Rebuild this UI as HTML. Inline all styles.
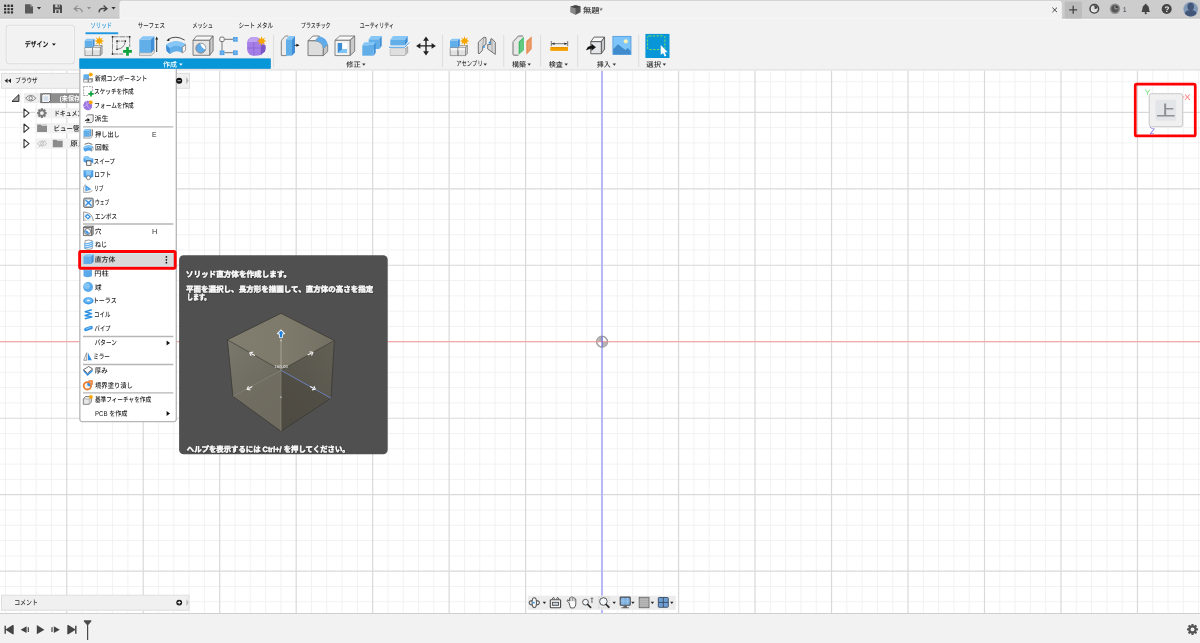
<!DOCTYPE html>
<html lang="ja"><head><meta charset="utf-8"><title>Fusion 360</title>
<style>
html,body{margin:0;padding:0;background:#f2f2f2;overflow:hidden}
svg{display:block;font-family:"Liberation Sans","Noto Sans CJK JP",sans-serif;will-change:transform;transform:translateZ(0);text-rendering:geometricPrecision}
</style></head><body>
<svg width="1200" height="643" viewBox="0 0 1200 643">
<rect x="0.00" y="70.40" width="1200.00" height="543.10" fill="#ffffff" />
<path d="M5.56 70.4V613.5M20.85 70.4V613.5M36.15 70.4V613.5M51.44 70.4V613.5M82.04 70.4V613.5M97.33 70.4V613.5M112.63 70.4V613.5M127.92 70.4V613.5M158.52 70.4V613.5M173.81 70.4V613.5M189.11 70.4V613.5M204.40 70.4V613.5M235.00 70.4V613.5M250.29 70.4V613.5M265.59 70.4V613.5M280.88 70.4V613.5M311.48 70.4V613.5M326.77 70.4V613.5M342.07 70.4V613.5M357.36 70.4V613.5M387.96 70.4V613.5M403.25 70.4V613.5M418.55 70.4V613.5M433.84 70.4V613.5M464.44 70.4V613.5M479.73 70.4V613.5M495.03 70.4V613.5M510.32 70.4V613.5M540.92 70.4V613.5M556.21 70.4V613.5M571.51 70.4V613.5M586.80 70.4V613.5M617.40 70.4V613.5M632.69 70.4V613.5M647.99 70.4V613.5M663.28 70.4V613.5M693.88 70.4V613.5M709.17 70.4V613.5M724.47 70.4V613.5M739.76 70.4V613.5M770.36 70.4V613.5M785.65 70.4V613.5M800.95 70.4V613.5M816.24 70.4V613.5M846.84 70.4V613.5M862.13 70.4V613.5M877.43 70.4V613.5M892.72 70.4V613.5M923.32 70.4V613.5M938.61 70.4V613.5M953.91 70.4V613.5M969.20 70.4V613.5M999.80 70.4V613.5M1015.09 70.4V613.5M1030.39 70.4V613.5M1045.68 70.4V613.5M1076.28 70.4V613.5M1091.57 70.4V613.5M1106.87 70.4V613.5M1122.16 70.4V613.5M1152.76 70.4V613.5M1168.05 70.4V613.5M1183.35 70.4V613.5M1198.64 70.4V613.5M0 81.72H1200M0 97.01H1200M0 127.61H1200M0 142.90H1200M0 158.20H1200M0 173.49H1200M0 204.09H1200M0 219.38H1200M0 234.68H1200M0 249.97H1200M0 280.57H1200M0 295.86H1200M0 311.16H1200M0 326.45H1200M0 357.05H1200M0 372.34H1200M0 387.64H1200M0 402.93H1200M0 433.53H1200M0 448.82H1200M0 464.12H1200M0 479.41H1200M0 510.01H1200M0 525.30H1200M0 540.60H1200M0 555.89H1200M0 586.49H1200M0 601.78H1200" stroke="#f2f2f2" stroke-width="1" fill="none"/>
<path d="M66.74 70.4V613.5M143.22 70.4V613.5M219.70 70.4V613.5M296.18 70.4V613.5M372.66 70.4V613.5M449.14 70.4V613.5M525.62 70.4V613.5M602.10 70.4V613.5M678.58 70.4V613.5M755.06 70.4V613.5M831.54 70.4V613.5M908.02 70.4V613.5M984.50 70.4V613.5M1060.98 70.4V613.5M1137.46 70.4V613.5M0 112.31H1200M0 188.79H1200M0 265.27H1200M0 341.75H1200M0 418.23H1200M0 494.71H1200M0 571.19H1200" stroke="#d9d9d9" stroke-width="1.2" fill="none"/>
<line x1="0.00" y1="341.65" x2="1200.00" y2="341.65" stroke="#f7a8a8" stroke-width="1.1" />
<line x1="601.95" y1="70.40" x2="601.95" y2="613.50" stroke="#adadf8" stroke-width="1.6" />
<g transform="translate(602.1,341.75)"><circle r="5.4" fill="#ffffff" stroke="#9c9c9c" stroke-width="1.5"/><path d="M0 0V-5.6A5.6 5.6 0 0 0 -5.6 0Z" fill="#b5b5b5"/><path d="M0 0V5.6A5.6 5.6 0 0 0 5.6 0Z" fill="#b5b5b5"/><line x1="-5.6" x2="5.6" stroke="#f08c8c" stroke-width="1"/><line y1="-5.6" y2="5.6" stroke="#6a6ad8" stroke-width="1.3"/></g>
<rect x="1.50" y="73.40" width="188.00" height="14.90" fill="#f0f0f0" stroke="#dedede" stroke-width="1" />
<path d="M7.6 78.6v4.4l-3-2.2zM11 78.6v4.4l-3-2.2z" fill="#222"/>
<text x="15.33" y="83.00" font-size="7.0" fill="#333" font-weight="500" textLength="22.20" lengthAdjust="spacingAndGlyphs" >ブラウザ</text>
<path d="M186.2 76.9v7.4l2.5-3.7z" fill="#b4b4b4"/>
<rect x="24.00" y="93.20" width="60.00" height="9.90" fill="#ececec" />
<rect x="40.00" y="93.20" width="45.00" height="9.90" fill="#8e8e8e" />
<path d="M12 101.4h6.9v-6.8z" fill="#a8a8a8" stroke="#2a2a2a" stroke-width="1" stroke-linejoin="round"/>
<text x="59.84" y="101.00" font-size="7.0" fill="#fff" font-weight="bold" textLength="22.26" lengthAdjust="spacingAndGlyphs" >(未保存)</text>
<rect x="35.00" y="107.90" width="50.00" height="10.40" fill="#f2f2f2" />
<path d="M24 108.90v8.4l5-4.2z" fill="#fff" stroke="#333" stroke-width="1.1" stroke-linejoin="round"/>
<rect x="35.00" y="123.00" width="50.00" height="10.40" fill="#f2f2f2" />
<path d="M24 124.00v8.4l5-4.2z" fill="#fff" stroke="#333" stroke-width="1.1" stroke-linejoin="round"/>
<rect x="35.00" y="138.40" width="50.00" height="10.40" fill="#f2f2f2" />
<path d="M24 139.40v8.4l5-4.2z" fill="#fff" stroke="#333" stroke-width="1.1" stroke-linejoin="round"/>
<text x="53.99" y="116.00" font-size="7.0" fill="#222" font-weight="500" textLength="52.57" lengthAdjust="spacingAndGlyphs" >ドキュメントの設定</text>
<text x="53.61" y="131.00" font-size="7.0" fill="#222" font-weight="500" textLength="32.18" lengthAdjust="spacingAndGlyphs" >ビュー管理</text>
<text x="70.39" y="146.00" font-size="7.0" fill="#222" font-weight="500" textLength="15.06" lengthAdjust="spacingAndGlyphs" >原点</text>
<rect x="1.50" y="595.20" width="187.50" height="15.00" fill="#f0f0f0" stroke="#dedede" stroke-width="1" />
<text x="14.24" y="605.00" font-size="7.0" fill="#333" font-weight="500" textLength="23.53" lengthAdjust="spacingAndGlyphs" >コメント</text>
<circle cx="179.2" cy="602.6" r="2.9" fill="#111"/><path d="M177.4 602.6h3.6M179.2 600.8v3.6" stroke="#fff" stroke-width="0.9"/>
<path d="M186.4 599v7.2l2.2-3.6z" fill="#b8b8b8"/>
<rect x="527.80" y="595.70" width="148.00" height="14.10" fill="#ececec" />
<rect x="1149.20" y="93.70" width="33.50" height="33.00" fill="#f0f0f0" rx="2" stroke="#c9c9c9" stroke-width="1" />
<rect x="1155.30" y="99.80" width="20.90" height="20.90" fill="#e3e5e8" />
<text x="1155.96" y="116.00" font-size="15" fill="#8c9097" font-weight="500" textLength="19.61" lengthAdjust="spacingAndGlyphs" >上</text>
<path d="M1182.9 97h1.4" stroke="#ff6a6a" stroke-width="0.8"/><path d="M1150.6 127v1" stroke="#7a66f0" stroke-width="0.8"/>
<text x="1144.44" y="95.00" font-size="8" fill="#80e080" font-weight="500" textLength="6.17" lengthAdjust="spacingAndGlyphs" >Y</text>
<text x="1184.37" y="100.00" font-size="8" fill="#ff6a6a" font-weight="500" textLength="6.29" lengthAdjust="spacingAndGlyphs" >X</text>
<text x="1150.00" y="134.00" font-size="8" fill="#7a66f0" font-weight="500" textLength="4.52" lengthAdjust="spacingAndGlyphs" font-style="italic">Z</text>
<path d="M25.6 98.2Q30.7 92.6 35.8 98.2Q30.7 103.8 25.6 98.2Z" fill="#f6f6f6" stroke="#777" stroke-width="0.9"/><circle cx="30.7" cy="98.2" r="1.7" fill="none" stroke="#777" stroke-width="0.9"/>
<path d="M43 93.9H50.4V100.6L48.6 102.5H41.7V95.4Z" fill="#f1f3f6" stroke="#555" stroke-width="0.8" stroke-linejoin="round"/><rect x="43.6" y="96.2" width="4.6" height="4.6" fill="#d5deeb"/>
<path d="M46.70 112.13L46.70 114.07L45.14 114.43L45.13 114.45L45.98 115.81L44.61 117.18L43.25 116.33L43.23 116.34L42.87 117.90L40.93 117.90L40.57 116.34L40.55 116.33L39.19 117.18L37.82 115.81L38.67 114.45L38.66 114.43L37.10 114.07L37.10 112.13L38.66 111.77L38.67 111.75L37.82 110.39L39.19 109.02L40.55 109.87L40.57 109.86L40.93 108.30L42.87 108.30L43.23 109.86L43.25 109.87L44.61 109.02L45.98 110.39L45.13 111.75L45.14 111.77Z" fill="#7a7a7a"/><circle cx="41.9" cy="113.1" r="1.9" fill="#f2f2f2"/>
<path d="M37.1 124.50H40.9L41.9 125.70H47.0V131.90H37.1Z" fill="#8c8c8c"/><path d="M41.5 124.50H47.0V125.30H42.300000000000004Z" fill="#b5b5b5"/>
<path d="M52.8 139.80H56.599999999999994L57.599999999999994 141.00H62.699999999999996V147.20H52.8Z" fill="#8c8c8c"/><path d="M57.199999999999996 139.80H62.699999999999996V140.60H58.0Z" fill="#b5b5b5"/>
<path d="M37.4 143.5Q42.2 138.4 47 143.5Q42.2 148.6 37.4 143.5Z" fill="none" stroke="#bdbdbd" stroke-width="0.8"/><circle cx="42.2" cy="143.5" r="1.6" fill="none" stroke="#bdbdbd" stroke-width="0.8"/><path d="M39 147L45.4 140" stroke="#bdbdbd" stroke-width="0.8"/>
<ellipse cx="534.3" cy="602.7" rx="5.1" ry="2.3" fill="#f8f8f8" stroke="#5a5a5a" stroke-width="1.1"/><ellipse cx="534.3" cy="602.7" rx="2.2" ry="4.9" fill="#f8f8f8" stroke="#5a5a5a" stroke-width="1.1"/><rect x="532.4" y="601.9000000000001" width="2.4" height="1.5" fill="#3f9ae8"/>
<rect x="550.3" y="599.8000000000001" width="10.3" height="8" rx="0.8" fill="#f4f4f4" stroke="#4a4a4a" stroke-width="1.1"/><rect x="552.4" y="602.3000000000001" width="6.1" height="3" fill="#c9d3e0" stroke="#4a4a4a" stroke-width="0.9"/><path d="M552 599.1L553.6 597.3000000000001L554.4 598.9000000000001M556.6 598.9000000000001L557.6 597.3000000000001L559 599.1" fill="none" stroke="#4a4a4a" stroke-width="0.9"/>
<path d="M569.2 602.9000000000001L567.3 601.3000000000001Q566.5 600.1 567.8 599.9000000000001L569.4 601.1V598.9000000000001Q569.4 597.7 570.4 597.9000000000001Q570.6 596.9000000000001 571.7 597.1Q572.6 596.7 573.2 597.7Q574.4 597.3000000000001 574.8 598.5Q576 598.7 575.8 600.1V604.1Q575.6 606.3000000000001 574.2 607.9000000000001H570.6Q569.4 605.3000000000001 569.2 602.9000000000001Z" fill="#fbfbfb" stroke="#444" stroke-width="0.85" stroke-linejoin="round"/>
<path d="M570.9 598.3000000000001V601.3000000000001M572.5 597.7V601.1M574.1 598.1V601.3000000000001" stroke="#555" stroke-width="0.6" fill="none"/>
<circle cx="585.5" cy="602.2" r="2.9" fill="#f4f7fa" stroke="#555" stroke-width="1"/><path d="M587.7 604.5L590.6 607.4000000000001" stroke="#2c2c2c" stroke-width="1.7" stroke-linecap="round"/><path d="M591.9 597.9000000000001V601.7M590.7 599.1L591.9 597.7L593.1 599.1M590.9 602.1h2" stroke="#444" stroke-width="0.7" fill="none"/>
<rect x="598.8" y="596.9000000000001" width="10.4" height="11" fill="none" stroke="#a8a8a8" stroke-width="0.5" stroke-dasharray="1.1 1.1"/><circle cx="603.4" cy="601.5" r="3.8" fill="#f3f8fb" stroke="#555" stroke-width="1"/><path d="M606.2 604.5L608.8 607.2" stroke="#2c2c2c" stroke-width="1.8" stroke-linecap="round"/>
<rect x="620.2" y="597.1" width="10" height="8.2" rx="0.6" fill="#7fb2e2" stroke="#4a4a4a" stroke-width="1.1"/><path d="M623 597.7V604.7M627.4 597.7V604.7M620.6 601.1H630" stroke="#a9cff0" stroke-width="0.5"/><path d="M623.4 605.7H627V607.3000000000001H629V608.3000000000001H621.4V607.3000000000001H623.4Z" fill="#666"/>
<rect x="639.2" y="597.3000000000001" width="9.8" height="10.4" fill="#a9a9a9" stroke="#6a6a6a" stroke-width="0.9"/><path d="M641.2 597.7V607.3000000000001M643.1 597.7V607.3000000000001M645 597.7V607.3000000000001M647 597.7V607.3000000000001M639.6 599.5H648.6M639.6 601.5H648.6M639.6 603.5H648.6M639.6 605.5H648.6" stroke="#c4c4c4" stroke-width="0.4"/>
<rect x="658.3" y="597.5" width="10" height="9.8" rx="0.8" fill="#6c9fd3" stroke="#48576b" stroke-width="1"/><path d="M663.3 597.7V607.1M658.6 602.4000000000001H668" stroke="#3d4f68" stroke-width="1"/>
<path d="M542.6999999999999 601.8000000000001h3.4l-1.7 2.2z" fill="#222"/>
<path d="M612.5 601.8000000000001h3.4l-1.7 2.2z" fill="#222"/>
<path d="M631.1999999999999 601.8000000000001h3.4l-1.7 2.2z" fill="#222"/>
<path d="M650.6999999999999 601.8000000000001h3.4l-1.7 2.2z" fill="#222"/>
<path d="M670.0999999999999 601.8000000000001h3.4l-1.7 2.2z" fill="#222"/>
<rect x="0.00" y="0.00" width="1200.00" height="18.80" fill="#cdcdcd" />
<rect x="0.00" y="17.20" width="1200.00" height="1.60" fill="#c5c5c5" />
<path d="M120 19V3.3a2 2 0 0 1 2-2H1059.3a2 2 0 0 1 2 2V19z" fill="#f2f2f2" stroke="#f9f9f9" stroke-width="0.8"/>
<rect x="0.00" y="18.80" width="1200.00" height="51.60" fill="#f2f2f2" />
<rect x="0.00" y="18.90" width="120.00" height="1.00" fill="#f9f9f9" />
<rect x="1061.50" y="18.90" width="140.00" height="1.00" fill="#f9f9f9" />
<line x1="0.00" y1="69.80" x2="1200.00" y2="69.80" stroke="#e6e6e6" stroke-width="1.4" />
<text x="582.90" y="13.00" font-size="7.6" fill="#333" font-weight="500" textLength="19.90" lengthAdjust="spacingAndGlyphs" >無題*</text>
<rect x="1064.70" y="1.60" width="17.30" height="17.00" fill="#bcbcbc" rx="1.5" />
<rect x="6.30" y="25.30" width="68.00" height="38.30" fill="#f2f2f2" rx="3" stroke="#dedede" stroke-width="1.2" />
<rect x="7.20" y="26.20" width="66.20" height="36.50" fill="none" rx="2.4" stroke="#f8f8f8" stroke-width="0.8" />
<text x="24.70" y="47.00" font-size="7.6" fill="#111" font-weight="bold" textLength="23.60" lengthAdjust="spacingAndGlyphs" >デザイン</text>
<path d="M52.00 43.45h3.8l-1.90 2.3z" fill="#111"/>
<text x="90.48" y="28.00" font-size="7.0" fill="#2f9be3" font-weight="500" textLength="21.45" lengthAdjust="spacingAndGlyphs" >ソリッド</text>
<text x="137.68" y="28.00" font-size="7.0" fill="#333" font-weight="500" textLength="27.27" lengthAdjust="spacingAndGlyphs" >サーフェス</text>
<text x="192.18" y="28.00" font-size="7.0" fill="#333" font-weight="500" textLength="20.85" lengthAdjust="spacingAndGlyphs" >メッシュ</text>
<text x="238.41" y="28.00" font-size="7.0" fill="#333" font-weight="500" textLength="34.70" lengthAdjust="spacingAndGlyphs" >シート メタル</text>
<text x="300.97" y="28.00" font-size="7.0" fill="#333" font-weight="500" textLength="29.61" lengthAdjust="spacingAndGlyphs" >プラスチック</text>
<text x="359.80" y="28.00" font-size="7.0" fill="#333" font-weight="500" textLength="34.12" lengthAdjust="spacingAndGlyphs" >ユーティリティ</text>
<rect x="85.50" y="32.30" width="32.70" height="1.90" fill="#1e96e0" />
<rect x="79.70" y="58.80" width="190.80" height="9.70" fill="#0796d8" stroke="#0585cb" stroke-width="0.6" />
<text x="163.10" y="67.00" font-size="7.0" fill="#fff" font-weight="500" textLength="13.88" lengthAdjust="spacingAndGlyphs" >作成</text>
<path d="M179.20 63.55h3.4l-1.70 2.1z" fill="#fff"/>
<text x="346.19" y="67.00" font-size="7.0" fill="#333" font-weight="500" textLength="14.56" lengthAdjust="spacingAndGlyphs" >修正</text>
<path d="M362.10 63.55h3.4l-1.70 2.1z" fill="#333"/>
<text x="456.17" y="66.00" font-size="7.0" fill="#333" font-weight="500" textLength="26.64" lengthAdjust="spacingAndGlyphs" >アセンブリ</text>
<path d="M483.50 63.55h3.4l-1.70 2.1z" fill="#333"/>
<text x="511.94" y="67.00" font-size="7.0" fill="#333" font-weight="500" textLength="14.00" lengthAdjust="spacingAndGlyphs" >構築</text>
<path d="M527.50 63.55h3.4l-1.70 2.1z" fill="#333"/>
<text x="548.71" y="67.00" font-size="7.0" fill="#333" font-weight="500" textLength="14.05" lengthAdjust="spacingAndGlyphs" >検査</text>
<path d="M564.50 63.55h3.4l-1.70 2.1z" fill="#333"/>
<text x="596.75" y="67.00" font-size="7.0" fill="#333" font-weight="500" textLength="13.83" lengthAdjust="spacingAndGlyphs" >挿入</text>
<path d="M612.60 63.55h3.4l-1.70 2.1z" fill="#333"/>
<text x="646.36" y="67.00" font-size="7.0" fill="#333" font-weight="500" textLength="14.57" lengthAdjust="spacingAndGlyphs" >選択</text>
<path d="M662.60 63.55h3.4l-1.70 2.1z" fill="#333"/>
<line x1="273.60" y1="35.00" x2="273.60" y2="67.00" stroke="#dcdcdc" stroke-width="1" />
<line x1="442.60" y1="35.00" x2="442.60" y2="67.00" stroke="#dcdcdc" stroke-width="1" />
<line x1="503.80" y1="35.00" x2="503.80" y2="67.00" stroke="#dcdcdc" stroke-width="1" />
<line x1="540.60" y1="35.00" x2="540.60" y2="67.00" stroke="#dcdcdc" stroke-width="1" />
<line x1="577.70" y1="35.00" x2="577.70" y2="67.00" stroke="#dcdcdc" stroke-width="1" />
<line x1="638.80" y1="35.00" x2="638.80" y2="67.00" stroke="#dcdcdc" stroke-width="1" />
<rect x="645.40" y="33.90" width="24.10" height="24.10" fill="#0896d8" />
<rect x="4.00" y="4.60" width="2.3" height="2.3" rx="0.5" fill="#333"/>
<rect x="4.00" y="7.90" width="2.3" height="2.3" rx="0.5" fill="#333"/>
<rect x="4.00" y="11.20" width="2.3" height="2.3" rx="0.5" fill="#333"/>
<rect x="7.40" y="4.60" width="2.3" height="2.3" rx="0.5" fill="#333"/>
<rect x="7.40" y="7.90" width="2.3" height="2.3" rx="0.5" fill="#333"/>
<rect x="7.40" y="11.20" width="2.3" height="2.3" rx="0.5" fill="#333"/>
<rect x="10.80" y="4.60" width="2.3" height="2.3" rx="0.5" fill="#333"/>
<rect x="10.80" y="7.90" width="2.3" height="2.3" rx="0.5" fill="#333"/>
<rect x="10.80" y="11.20" width="2.3" height="2.3" rx="0.5" fill="#333"/>
<path d="M25 4.2H30.4L33 6.8V13.4H25Z" fill="#5a5a5a"/><path d="M30.4 4.2V6.8H33Z" fill="#9a9a9a"/>
<path d="M36.9 7h4.2l-2.1 2.6z" fill="#333"/>
<path d="M53 4.4H60.7L62 5.7V13H53Z" fill="#4a4a4a"/><rect x="55.2" y="4.4" width="4.4" height="3" fill="#cccccc"/><rect x="57.6" y="4.8" width="1.2" height="2.1" fill="#4a4a4a"/><rect x="55" y="9.4" width="5" height="3.6" fill="#cccccc"/><rect x="56.4" y="10.3" width="2.2" height="2.7" fill="#4a4a4a"/>
<path d="M77.6 5.6L74.2 8.6L77.6 11.2M74.6 8.5H78.4Q82 8.6 82.2 12.4" fill="none" stroke="#8c8c8c" stroke-width="1.2"/>
<path d="M87 7h4l-2 2.5z" fill="#8c8c8c"/>
<path d="M103.6 5.6L107 8.6L103.6 11.2M106.6 8.5H102.8Q99.2 8.6 99 12.4" fill="none" stroke="#444" stroke-width="1.3"/>
<path d="M111.4 7h4.2l-2.1 2.6z" fill="#333"/>
<path d="M570.6 6.6L575.6 5.2L580.6 6.6V12.2L575.6 14.8L570.6 12.2Z" fill="#555"/><path d="M570.6 6.6L575.6 8.2V14.8L570.6 12.2Z" fill="#8a8a8a"/><path d="M570.6 6.6L575.6 5.2L580.6 6.6L575.6 8.2Z" fill="#444"/>
<path d="M1052.4 7.6l4.6 4.6M1057 7.6l-4.6 4.6" stroke="#333" stroke-width="0.9"/>
<path d="M1069.2 9.8h8M1073.2 5.8v8" stroke="#444" stroke-width="1.3"/>
<circle cx="1094.3" cy="8.7" r="4.3" fill="#dcdcdc" stroke="#444" stroke-width="1.5"/><path d="M1093.2 5.4Q1096.6 4.6 1097.8 7.8Q1096 9.6 1094.2 8.4Q1095.6 7 1093.2 5.4Z" fill="#444"/><path d="M1091 9.8Q1092.6 12.4 1095.6 11.8" stroke="#f2f2f2" stroke-width="1" fill="none"/>
<circle cx="1115" cy="8.8" r="5.2" fill="#8e8e8e"/><circle cx="1115" cy="8.8" r="3.7" fill="#565656"/><path d="M1115 8.8V5.9A2.9 2.9 0 0 1 1117.9 8.8Z" fill="#3c3c3c"/><path d="M1115 5.9V8.8H1117.9" stroke="#b8b8b8" stroke-width="0.8" fill="none"/>
<path d="M1145.7 3.8a0.9 0.9 0 0 1 .9.9Q1149 5.6 1149 8.6Q1149 11 1150.2 12H1141.2Q1142.4 11 1142.4 8.6Q1142.4 5.6 1144.8 4.7a0.9 0.9 0 0 1 .9-.9Z" fill="#444"/><circle cx="1145.7" cy="13.2" r="1.1" fill="#444"/>
<circle cx="1166.7" cy="9" r="5" fill="#444"/>
<circle cx="1190.7" cy="9.3" r="7.3" fill="#8198b8"/><ellipse cx="1190.7" cy="6.6" rx="3.3" ry="3.9" fill="#43577a"/><path d="M1184.8 13.6Q1185.4 10 1190.7 10Q1196 10 1196.6 13.6A7.3 7.3 0 0 1 1184.8 13.6Z" fill="#43577a"/>
<text x="1122.80" y="12.00" font-size="7" fill="#3a3f4a" font-weight="500" >1</text>
<text x="1164.60" y="12.00" font-size="8" fill="#f2f2f2" font-weight="bold" >?</text>
<g transform="translate(0,0)">
<path d="M92.60 47.40L94.50 45.60L102.10 45.60L100.20 47.40Z" fill="#f7f7f7" stroke="#7a7a7a" stroke-width="0.7" stroke-linejoin="round"/>
<path d="M100.20 47.40L102.10 45.60L102.10 53.80L100.20 55.60Z" fill="#c9c9c9" stroke="#7a7a7a" stroke-width="0.7" stroke-linejoin="round"/>
<path d="M92.60 47.40L100.20 47.40L100.20 55.60L92.60 55.60Z" fill="#e1e1e1" stroke="#7a7a7a" stroke-width="0.7" stroke-linejoin="round"/>
<path d="M84.90 47.60L84.90 47.60L92.40 47.60L92.40 47.60Z" fill="#f7f7f7" stroke="#7a7a7a" stroke-width="0.7" stroke-linejoin="round"/>
<path d="M92.40 47.60L92.40 47.60L92.40 55.60L92.40 55.60Z" fill="#c9c9c9" stroke="#7a7a7a" stroke-width="0.7" stroke-linejoin="round"/>
<path d="M84.90 47.60L92.40 47.60L92.40 55.60L84.90 55.60Z" fill="#e1e1e1" stroke="#7a7a7a" stroke-width="0.7" stroke-linejoin="round"/>
<path d="M85.3 48H92V50.4H85.3ZM93 47.8H99.8V50.2H93Z" fill="#f3f3f3"/>
<path d="M84.70 40.60L86.60 38.70L94.50 38.70L92.60 40.60Z" fill="#86c7f7"/>
<path d="M92.60 40.60L94.50 38.70L94.50 45.50L92.60 47.40Z" fill="#3f8fd8"/>
<path d="M84.70 40.60L92.60 40.60L92.60 47.40L84.70 47.40Z" fill="#62aee9"/>
<path d="M99.30 36.10L100.18 38.88L102.76 37.54L101.42 40.12L104.20 41.00L101.42 41.88L102.76 44.46L100.18 43.12L99.30 45.90L98.42 43.12L95.84 44.46L97.18 41.88L94.40 41.00L97.18 40.12L95.84 37.54L98.42 38.88Z" fill="#f7a600"/>
</g>
<g fill="none" stroke="#4a4a4a" stroke-width="0.65">
<path d="M112.5 36.8H129.7M112.5 36.8V54M129.7 36.8V47M112.5 54H123" stroke-dasharray="6 0.8"/>
<path d="M117 41.1H125.3M117 41.1V49.3" stroke-dasharray="3 0.8"/>
<path d="M125.3 41.1Q124.6 48.6 117 49.3"/>
</g>
<rect x="111.75" y="36.05" width="1.5" height="1.5" fill="#222"/>
<rect x="128.95" y="36.05" width="1.5" height="1.5" fill="#222"/>
<rect x="111.75" y="53.25" width="1.5" height="1.5" fill="#222"/>
<rect x="116.25" y="40.35" width="1.5" height="1.5" fill="#222"/>
<rect x="124.55" y="40.35" width="1.5" height="1.5" fill="#222"/>
<rect x="116.25" y="48.55" width="1.5" height="1.5" fill="#222"/>
<path d="M123.1 51.3H131.9M127.5 46.9V55.7" stroke="#0da33b" stroke-width="2.7" fill="none"/>
<path d="M139.50 52.70L151.00 52.70L154.40 50.00L154.40 52.60L151.00 55.60L139.50 55.60Z" fill="#e2e2e2" stroke="#8a8a8a" stroke-width="0.6"/>
<path d="M139.30 39.60L142.70 36.20L154.40 36.20L151.00 39.60Z" fill="#86c7f7"/>
<path d="M151.00 39.60L154.40 36.20L154.40 49.30L151.00 52.70Z" fill="#3f8fd8"/>
<path d="M139.30 39.60L151.00 39.60L151.00 52.70L139.30 52.70Z" fill="#62aee9"/>
<path d="M156.7 52V38.2" stroke="#222" stroke-width="0.9"/><path d="M155.3 39.6L156.7 36.6L158.1 39.6Z" fill="#222"/>
<path d="M166 45Q175.3 38 185.5 44L182.3 53Q176 49.2 170 54L166.6 51Z" fill="#62aee9"/>
<path d="M166 45Q175.3 38 185.5 44L182.3 47.4Q176 43.6 169.6 48Z" fill="#86c7f7"/>
<path d="M166 45L169.6 48L170 54L166.6 51Z" fill="#3f8fd8"/>
<path d="M182.3 47.4L185.6 44.6V50.3L182.3 53Z" fill="#f6f6f6" stroke="#6b5d55" stroke-width="0.6"/>
<path d="M167.8 39.6Q175.5 34.6 184.7 40.1" fill="none" stroke="#222" stroke-width="0.8"/>
<path d="M166.4 40.6L169.4 38.4L169.2 41Z" fill="#111"/>
<path d="M193.00 40.30L196.40 36.00L213.10 36.00L209.70 40.30Z" fill="#f7f7f7" stroke="#666" stroke-width="0.8" stroke-linejoin="round"/>
<path d="M209.70 40.30L213.10 36.00L213.10 51.00L209.70 55.30Z" fill="#cbcbcb" stroke="#666" stroke-width="0.8" stroke-linejoin="round"/>
<path d="M193.00 40.30L209.70 40.30L209.70 55.30L193.00 55.30Z" fill="#e6e6e6" stroke="#666" stroke-width="0.8" stroke-linejoin="round"/>
<circle cx="200.8" cy="48.2" r="5" fill="#5fabea" stroke="#8a7a72" stroke-width="0.8"/>
<path d="M200.3 43.6A5 5 0 0 1 205.6 49.4Q201.6 48.6 200.3 43.6Z" fill="#ffffff"/>
<g stroke="#666" stroke-width="0.9" fill="none"><path d="M224.3 39.3H233M222 41.6V50.3M224.3 52.7H233"/><rect x="219.8" y="37.1" width="4.4" height="4.4" rx="1.2" fill="#fafafa"/></g>
<rect x="233" y="37" width="4.7" height="4.7" fill="#4f9fe6"/>
<path d="M235.35 37v4.7M233 39.35h4.7" stroke="#8cc8f8" stroke-width="0.5"/>
<rect x="219.7" y="50.4" width="4.7" height="4.7" fill="#4f9fe6"/>
<path d="M222.04999999999998 50.4v4.7M219.7 52.75h4.7" stroke="#8cc8f8" stroke-width="0.5"/>
<rect x="233" y="50.4" width="4.7" height="4.7" fill="#4f9fe6"/>
<path d="M235.35 50.4v4.7M233 52.75h4.7" stroke="#8cc8f8" stroke-width="0.5"/>
<path d="M251.5 37.3Q256 36.4 259.2 38.4L265.4 45.5Q266 48.5 265 51.2L260.8 55Q256 56.4 251 55.2Q247.3 53.6 247.1 49V42.5Q247.6 38.6 251.5 37.3Z" fill="#a57de6"/>
<path d="M260.8 44.5L265.4 45.5Q266 48.5 265 51.2L260.8 55Z" fill="#7a55c6"/>
<path d="M250.5 37.8Q255.5 36 259.3 38.6L256.5 42H248Q248.2 39 250.5 37.8Z" fill="#c0a2f2"/>
<path d="M247.3 48H260.6M253.8 41.8V55.6" stroke="#8a62d2" stroke-width="0.7" fill="none"/>
<path d="M261.70 36.10L262.58 38.88L265.16 37.54L263.82 40.12L266.60 41.00L263.82 41.88L265.16 44.46L262.58 43.12L261.70 45.90L260.82 43.12L258.24 44.46L259.58 41.88L256.80 41.00L259.58 40.12L258.24 37.54L260.82 38.88Z" fill="#f7a600"/>
<path d="M288.3 36H285.4Q281.3 40 281.3 41.4V55.6H287" fill="#ececec" stroke="#777" stroke-width="0.9"/>
<path d="M286.00 39.40L289.00 36.00L295.00 36.00L292.00 39.40Z" fill="#86c7f7"/>
<path d="M292.00 39.40L295.00 36.00L295.00 52.30L292.00 55.70Z" fill="#3f8fd8"/>
<path d="M286.00 39.40L292.00 39.40L292.00 55.70L286.00 55.70Z" fill="#62aee9"/>
<path d="M294.2 45.3H297" stroke="#222" stroke-width="0.8"/><path d="M296.4 43.8L299.5 45.3L296.4 46.8Z" fill="#111"/>
<path d="M308 40.8L312.8 36H319.5L315 40.8Z" fill="#f6f6f6" stroke="#666" stroke-width="0.8" stroke-linejoin="round"/>
<path d="M308 55.6V40.8H315Q322.8 41.5 323.3 48.5V55.6Z" fill="#dddddd" stroke="#666" stroke-width="0.8" stroke-linejoin="round"/>
<path d="M323.3 48.5L327.7 44.6V51.6L323.3 55.6Z" fill="#c6c6c6" stroke="#666" stroke-width="0.7" stroke-linejoin="round"/>
<path d="M315 40.8L319.5 36.2Q327 38 327.7 44.6L323.3 48.5Q322.8 41.5 315 40.8Z" fill="#5fabea"/>
<path d="M335.00 40.30L339.70 36.00L354.70 36.00L350.00 40.30Z" fill="#fafafa" stroke="#696969" stroke-width="0.8" stroke-linejoin="round"/>
<path d="M350.00 40.30L354.70 36.00L354.70 51.30L350.00 55.60Z" fill="#cbcbcb" stroke="#696969" stroke-width="0.8" stroke-linejoin="round"/>
<path d="M335.00 40.30L350.00 40.30L350.00 55.60L335.00 55.60Z" fill="#f1f1f1" stroke="#696969" stroke-width="0.8" stroke-linejoin="round"/>
<rect x="337.7" y="43" width="4.6" height="10" fill="#3d8cd3"/>
<path d="M342.3 49H347V53H337.7L342.3 49Z" fill="#7fc3f7"/>
<rect x="342.3" y="43" width="4.7" height="6" fill="#ffffff"/>
<path d="M368.70 39.30L371.10 36.00L381.70 36.00L379.30 39.30Z" fill="#86c7f7"/>
<path d="M379.30 39.30L381.70 36.00L381.70 45.70L379.30 49.00Z" fill="#3f8fd8"/>
<path d="M368.70 39.30L379.30 39.30L379.30 49.00L368.70 49.00Z" fill="#62aee9"/>
<path d="M362.30 45.30L364.30 42.30L375.70 42.30L373.70 45.30Z" fill="#86c7f7"/>
<path d="M373.70 45.30L375.70 42.30L375.70 52.70L373.70 55.70Z" fill="#3f8fd8"/>
<path d="M362.30 45.30L373.70 45.30L373.70 55.70L362.30 55.70Z" fill="#62aee9"/>
<path d="M390.30 49.00L405.00 49.00L407.70 46.50L407.70 52.60L405.00 55.40L390.30 55.40Z" fill="#c0c0c0" stroke="#8a8a8a" stroke-width="0.6"/>
<rect x="390.3" y="49" width="14.7" height="6.2" fill="#dfdfdf"/>
<path d="M390.30 39.70L393.00 36.10L407.70 36.10L405.00 39.70Z" fill="#86c7f7"/>
<path d="M405.00 39.70L407.70 36.10L407.70 41.80L405.00 45.40Z" fill="#3f8fd8"/>
<path d="M390.30 39.70L405.00 39.70L405.00 45.40L390.30 45.40Z" fill="#62aee9"/>
<path d="M389 47.3H404.7L409.3 42.4" fill="none" stroke="#4aa2ea" stroke-width="1"/>
<path d="M419 45.9H433M426 38.9V52.9" stroke="#222" stroke-width="1.4" fill="none"/>
<path d="M416.1 45.9l4.3 -2.9v5.8zM435.9 45.9l-4.3 -2.9v5.8zM426 36.4l-2.9 4.3h5.8zM426 55.5l-2.9 -4.3h5.8z" fill="#222"/>
<g transform="translate(365.3,0)">
<path d="M92.60 47.40L94.50 45.60L102.10 45.60L100.20 47.40Z" fill="#f7f7f7" stroke="#7a7a7a" stroke-width="0.7" stroke-linejoin="round"/>
<path d="M100.20 47.40L102.10 45.60L102.10 53.80L100.20 55.60Z" fill="#c9c9c9" stroke="#7a7a7a" stroke-width="0.7" stroke-linejoin="round"/>
<path d="M92.60 47.40L100.20 47.40L100.20 55.60L92.60 55.60Z" fill="#e1e1e1" stroke="#7a7a7a" stroke-width="0.7" stroke-linejoin="round"/>
<path d="M84.90 47.60L84.90 47.60L92.40 47.60L92.40 47.60Z" fill="#f7f7f7" stroke="#7a7a7a" stroke-width="0.7" stroke-linejoin="round"/>
<path d="M92.40 47.60L92.40 47.60L92.40 55.60L92.40 55.60Z" fill="#c9c9c9" stroke="#7a7a7a" stroke-width="0.7" stroke-linejoin="round"/>
<path d="M84.90 47.60L92.40 47.60L92.40 55.60L84.90 55.60Z" fill="#e1e1e1" stroke="#7a7a7a" stroke-width="0.7" stroke-linejoin="round"/>
<path d="M85.3 48H92V50.4H85.3ZM93 47.8H99.8V50.2H93Z" fill="#f3f3f3"/>
<path d="M84.70 40.60L86.60 38.70L94.50 38.70L92.60 40.60Z" fill="#86c7f7"/>
<path d="M92.60 40.60L94.50 38.70L94.50 45.50L92.60 47.40Z" fill="#3f8fd8"/>
<path d="M84.70 40.60L92.60 40.60L92.60 47.40L84.70 47.40Z" fill="#62aee9"/>
<path d="M99.30 36.10L100.18 38.88L102.76 37.54L101.42 40.12L104.20 41.00L101.42 41.88L102.76 44.46L100.18 43.12L99.30 45.90L98.42 43.12L95.84 44.46L97.18 41.88L94.40 41.00L97.18 40.12L95.84 37.54L98.42 38.88Z" fill="#f7a600"/>
</g>
<path d="M478.3 42.2L483.7 37.3L486 37.6V44.4L482.7 46.5V50L479 54L478.3 53Z" fill="#dadada" stroke="#666" stroke-width="0.9" stroke-linejoin="round"/>
<path d="M487.7 44.6V49L495.3 54.4V42.4L492 38.7L490.7 39V44.5Z" fill="#dadada" stroke="#666" stroke-width="0.9" stroke-linejoin="round"/>
<path d="M483.7 37.3L482.7 46.5" stroke="#888" stroke-width="0.6"/><path d="M492 38.7V52" stroke="#888" stroke-width="0.6"/>
<circle cx="484" cy="47" r="1" fill="#2f9bea"/><circle cx="489.7" cy="42.7" r="1.1" fill="#2f9bea"/>
<path d="M523 36H518.4L513 41.8V54.4Q513 55.2 514 55.2H518.4" fill="#e6e6e6" stroke="#666" stroke-width="0.9" stroke-linejoin="round"/>
<path d="M513.4 41.8H518.4V55" fill="#e6e6e6" stroke="none"/>
<path d="M518.70 41.70L524.00 36.70L524.00 49.70L518.70 54.70Z" fill="#3fb965"/>
<path d="M520.00 41.70L524.00 37.90L524.00 49.70L520.00 53.50Z" fill="#62c982"/>
<path d="M526.30 41.30L531.70 36.30L531.70 49.00L526.30 54.70Z" fill="#e78b52"/>
<path d="M527.60 42.00L530.60 39.20L530.60 48.60L527.60 51.70Z" fill="#ec9d6b"/>
<path d="M551.3 41V46.2M567.7 41V46.2M552 43.7H567" stroke="#555" stroke-width="0.8" fill="none"/>
<path d="M551.7 43.7L554.6 42.5V44.9ZM567.3 43.7L564.4 42.5V44.9Z" fill="#333"/>
<rect x="550.3" y="47" width="17.7" height="3.9" fill="#f5a000"/>
<path d="M552.5 47v1.2M554.7 47v.8M556.9 47v1.2M559.1 47v.8M561.3 47v1.2M563.5 47v.8M565.7 47v1.2" stroke="#b06a00" stroke-width="0.5"/>
<path d="M590.80 41.70L594.10 37.10L604.60 37.10L601.30 41.70Z" fill="#f6f6f6" stroke="#555" stroke-width="0.9" stroke-linejoin="round"/>
<path d="M601.30 41.70L604.60 37.10L604.60 49.15L601.30 53.75Z" fill="#c5c7ca" stroke="#555" stroke-width="0.9" stroke-linejoin="round"/>
<path d="M590.80 41.70L601.30 41.70L601.30 53.75L590.80 53.75Z" fill="#e3e5e8" stroke="#555" stroke-width="0.9" stroke-linejoin="round"/>
<path d="M586.5 50Q587.3 46 591.7 46V44.2L595.6 47.2L591.7 50.3V48.5Q589 48.4 586.5 50Z" fill="#111" stroke="#111" stroke-width="0.5" stroke-linejoin="round"/>
<rect x="612.9" y="36.3" width="18.1" height="18.3" fill="#7ec6f9" stroke="#3f90da" stroke-width="0.7"/>
<path d="M613.2 54.3V49.2L617.9 44.2L625.4 50L627.9 47.9L630.7 51.2V54.3Z" fill="#3f8bcb"/>
<circle cx="625.8" cy="41.3" r="2.1" fill="#fdf1b4"/>
<rect x="647.6" y="35.9" width="17.3" height="13.7" rx="1.6" fill="none" stroke="#7fe35c" stroke-width="1" stroke-dasharray="2.2 1.5"/>
<path d="M660.7 45V55L663 53L664.7 56.6L666.3 55.8L664.7 52.3H667.7Z" fill="#ffffff"/>
<path d="M79.85 69V419.20000000000005a2.4 2.4 0 0 0 2.4 2.4H173.9a2.4 2.4 0 0 0 2.4 -2.4V69" fill="#ffffff" stroke="#b6b6b6" stroke-width="1.3"/>
<circle cx="179.15" cy="80.7" r="3.05" fill="#111"/><path d="M177.5 80.7h3.3" stroke="#bbb" stroke-width="1"/>
<line x1="83.00" y1="126.90" x2="173.30" y2="126.90" stroke="#b6b6b6" stroke-width="1.4" />
<line x1="83.00" y1="224.00" x2="173.30" y2="224.00" stroke="#b6b6b6" stroke-width="1.4" />
<line x1="83.00" y1="336.50" x2="173.30" y2="336.50" stroke="#b6b6b6" stroke-width="1.4" />
<line x1="83.00" y1="364.50" x2="173.30" y2="364.50" stroke="#b6b6b6" stroke-width="1.4" />
<line x1="83.00" y1="392.90" x2="173.30" y2="392.90" stroke="#b6b6b6" stroke-width="1.4" />
<text x="94.91" y="81.00" font-size="7.0" fill="#222" font-weight="500" textLength="52.51" lengthAdjust="spacingAndGlyphs" >新規コンポーネント</text>
<text x="94.00" y="94.00" font-size="7.0" fill="#222" font-weight="500" textLength="39.56" lengthAdjust="spacingAndGlyphs" >スケッチを作成</text>
<text x="94.36" y="108.00" font-size="7.0" fill="#222" font-weight="500" textLength="39.42" lengthAdjust="spacingAndGlyphs" >フォームを作成</text>
<text x="94.52" y="121.00" font-size="7.0" fill="#222" font-weight="500" textLength="13.82" lengthAdjust="spacingAndGlyphs" >派生</text>
<text x="95.02" y="137.00" font-size="7.0" fill="#222" font-weight="500" textLength="24.78" lengthAdjust="spacingAndGlyphs" >押し出し</text>
<text x="151.98" y="137.00" font-size="7.2" fill="#333" font-weight="500" textLength="4.54" lengthAdjust="spacingAndGlyphs" >E</text>
<text x="95.10" y="150.00" font-size="7.0" fill="#222" font-weight="500" textLength="13.60" lengthAdjust="spacingAndGlyphs" >回転</text>
<text x="93.86" y="164.00" font-size="7.0" fill="#222" font-weight="500" textLength="21.13" lengthAdjust="spacingAndGlyphs" >スイープ</text>
<text x="94.30" y="177.00" font-size="7.0" fill="#222" font-weight="500" textLength="16.66" lengthAdjust="spacingAndGlyphs" >ロフト</text>
<text x="93.97" y="191.00" font-size="7.0" fill="#222" font-weight="500" textLength="9.47" lengthAdjust="spacingAndGlyphs" >リブ</text>
<text x="94.88" y="205.00" font-size="7.0" fill="#222" font-weight="500" textLength="14.33" lengthAdjust="spacingAndGlyphs" >ウェブ</text>
<text x="94.88" y="219.00" font-size="7.0" fill="#222" font-weight="500" textLength="22.05" lengthAdjust="spacingAndGlyphs" >エンボス</text>
<text x="95.08" y="234.00" font-size="7.0" fill="#222" font-weight="500" textLength="6.43" lengthAdjust="spacingAndGlyphs" >穴</text>
<text x="152.10" y="234.00" font-size="7.2" fill="#333" font-weight="500" textLength="5.30" lengthAdjust="spacingAndGlyphs" >H</text>
<text x="95.00" y="247.00" font-size="7.0" fill="#222" font-weight="500" textLength="12.04" lengthAdjust="spacingAndGlyphs" >ねじ</text>
<rect x="81.70" y="253.65" width="91.70" height="12.45" fill="#d9d9d9" stroke="#c6edf3" stroke-width="1" />
<text x="94.70" y="262.00" font-size="7.0" fill="#222" font-weight="500" textLength="20.60" lengthAdjust="spacingAndGlyphs" >直方体</text>
<circle cx="166.4" cy="256.90" r="0.85" fill="#111"/>
<circle cx="166.4" cy="259.80" r="0.85" fill="#111"/>
<circle cx="166.4" cy="262.70" r="0.85" fill="#111"/>
<text x="94.26" y="276.00" font-size="7.0" fill="#222" font-weight="500" textLength="14.36" lengthAdjust="spacingAndGlyphs" >円柱</text>
<text x="94.70" y="290.00" font-size="7.0" fill="#222" font-weight="500" textLength="6.80" lengthAdjust="spacingAndGlyphs" >球</text>
<text x="92.90" y="303.00" font-size="7.0" fill="#222" font-weight="500" textLength="23.75" lengthAdjust="spacingAndGlyphs" >トーラス</text>
<text x="93.96" y="317.00" font-size="7.0" fill="#222" font-weight="500" textLength="16.44" lengthAdjust="spacingAndGlyphs" >コイル</text>
<text x="94.60" y="331.00" font-size="7.0" fill="#222" font-weight="500" textLength="15.91" lengthAdjust="spacingAndGlyphs" >パイプ</text>
<text x="94.70" y="345.00" font-size="7.0" fill="#222" font-weight="500" textLength="22.10" lengthAdjust="spacingAndGlyphs" >パターン</text>
<path d="M166.60 340.50v5l3.4 -2.50z" fill="#111"/>
<text x="93.23" y="359.00" font-size="7.0" fill="#222" font-weight="500" textLength="16.73" lengthAdjust="spacingAndGlyphs" >ミラー</text>
<text x="94.68" y="373.00" font-size="7.0" fill="#222" font-weight="500" textLength="12.93" lengthAdjust="spacingAndGlyphs" >厚み</text>
<text x="95.03" y="388.00" font-size="7.0" fill="#222" font-weight="500" textLength="37.87" lengthAdjust="spacingAndGlyphs" >境界塗り潰し</text>
<text x="94.92" y="402.00" font-size="7.0" fill="#222" font-weight="500" textLength="56.15" lengthAdjust="spacingAndGlyphs" >基準フィーチャを作成</text>
<text x="95.02" y="416.00" font-size="7.0" fill="#222" font-weight="500" textLength="32.32" lengthAdjust="spacingAndGlyphs" >PCB を作成</text>
<path d="M166.60 411.10v5l3.4 -2.50z" fill="#111"/>
<path d="M88.20 79.30L89.00 78.50L92.60 78.50L91.80 79.30Z" fill="#f4f4f4" stroke="#6f6f6f" stroke-width="0.55" stroke-linejoin="round"/>
<path d="M91.80 79.30L92.60 78.50L92.60 81.40L91.80 82.20Z" fill="#c6c6c6" stroke="#6f6f6f" stroke-width="0.55" stroke-linejoin="round"/>
<path d="M88.20 79.30L91.80 79.30L91.80 82.20L88.20 82.20Z" fill="#ededed" stroke="#6f6f6f" stroke-width="0.55" stroke-linejoin="round"/>
<path d="M83.50 79.30L83.50 79.30L88.00 79.30L88.00 79.30Z" fill="#f4f4f4" stroke="#6f6f6f" stroke-width="0.55" stroke-linejoin="round"/>
<path d="M88.00 79.30L88.00 79.30L88.00 82.20L88.00 82.20Z" fill="#c6c6c6" stroke="#6f6f6f" stroke-width="0.55" stroke-linejoin="round"/>
<path d="M83.50 79.30L88.00 79.30L88.00 82.20L83.50 82.20Z" fill="#ededed" stroke="#6f6f6f" stroke-width="0.55" stroke-linejoin="round"/>
<path d="M83.40 74.70L84.20 73.90L88.80 73.90L88.00 74.70Z" fill="#86c7f7"/>
<path d="M88.00 74.70L88.80 73.90L88.80 78.40L88.00 79.20Z" fill="#3f8fd8"/>
<path d="M83.40 74.70L88.00 74.70L88.00 79.20L83.40 79.20Z" fill="#62aee9"/>
<path d="M90.80 72.10L91.37 73.21L92.57 72.83L92.19 74.03L93.30 74.60L92.19 75.17L92.57 76.37L91.37 75.99L90.80 77.10L90.23 75.99L89.03 76.37L89.41 75.17L88.30 74.60L89.41 74.03L89.03 72.83L90.23 73.21Z" fill="#f7a600"/>
<path d="M83.6 86.60H92.4M83.6 86.60V95.50M92.4 86.60V91.10M83.6 95.50H88" stroke="#666" stroke-width="0.6" stroke-dasharray="1.8 0.9" fill="none"/>
<path d="M88.3 93.90H93.7M91 91.20V96.60" stroke="#0da33b" stroke-width="1.7" fill="none"/>
<path d="M87.4 100.70Q90.6 100.90 92 104.50Q92.8 108.10 89.6 109.90Q86 111.10 83.8 108.10Q82.4 104.90 84.4 102.30Q85.6 100.70 87.4 100.70Z" fill="#9b74e0"/>
<path d="M84 106.90Q88 104.50 90 101.50M86.6 101.10Q86.2 106.50 90 109.10" stroke="#cdb6f6" stroke-width="0.7" fill="none"/>
<path d="M90.80 99.80L91.37 100.91L92.57 100.53L92.19 101.73L93.30 102.30L92.19 102.87L92.57 104.07L91.37 103.69L90.80 104.80L90.23 103.69L89.03 104.07L89.41 102.87L88.30 102.30L89.41 101.73L89.03 100.53L90.23 100.91Z" fill="#f7a600"/>
<path d="M86.2 116.40L87.8 114.80H93.2V121.00L91.6 122.60H86.2" fill="#f2f2f2" stroke="#444" stroke-width="0.7" stroke-linejoin="round"/>
<path d="M84.6 121.40Q85 119.20 87.6 119.20V118.00L90 119.90L87.6 121.80V120.60Q86 120.60 84.6 121.40Z" fill="#111"/>
<path d="M83.6 136.70H90.6L92 135.50V136.90L90.6 138.30H83.6Z" fill="#e2e2e2" stroke="#8a8a8a" stroke-width="0.5"/>
<path d="M83.50 130.50L84.90 129.10L90.80 129.10L89.40 130.50Z" fill="#86c7f7"/>
<path d="M89.40 130.50L90.80 129.10L90.80 135.30L89.40 136.70Z" fill="#3f8fd8"/>
<path d="M83.50 130.50L89.40 130.50L89.40 136.70L83.50 136.70Z" fill="#62aee9"/>
<path d="M92.2 135.70V129.30" stroke="#222" stroke-width="0.8"/>
<path d="M83.5 147.30Q88 143.70 93 146.70L91.5 151.30Q88.4 149.30 85.4 151.70L83.7 150.30Z" fill="#4d9fe6"/>
<path d="M83.5 147.30Q88 143.70 93 146.70L91.5 148.30Q88.2 146.30 85.3 148.70Z" fill="#86c7f7"/>
<path d="M91.5 148.30L93.1 146.90V149.90L91.5 151.30Z" fill="#f6f6f6" stroke="#555" stroke-width="0.4"/>
<path d="M84.6 144.30Q88.4 141.70 92.4 144.50" fill="none" stroke="#333" stroke-width="0.7"/>
<path d="M83.5 157.70L85.4 156.10H88L89 157.50L93.3 158.50V163.70L91.4 162.30H86.4L85.6 162.70L83.5 161.50Z" fill="#4d9fe6"/>
<path d="M83.5 157.70L85.4 156.10H88L89 157.50L93.3 158.50L91.5 159.90H86Z" fill="#86c7f7"/>
<rect x="86.7" y="160.90" width="4.3" height="4.4" fill="#fff" stroke="#444" stroke-width="0.8"/>
<path d="M83.5 170.30H93.3V176.70L90.6 178.10H86.2L83.5 176.70Z" fill="#4d9fe6"/>
<path d="M85 170.30H91.8L90 176.50H86.8Z" fill="#86c7f7"/>
<circle cx="88.4" cy="177.70" r="2" fill="#fff" stroke="#555" stroke-width="0.7"/>
<path d="M85.4 184.30Q83.6 186.30 83.6 187.90V192.50H88Q91 192.10 92.6 190.70" fill="#ececec" stroke="#999" stroke-width="0.7"/>
<path d="M85.4 185.10L91.2 189.30L85.4 191.30Z" fill="#3f9ae8"/>
<path d="M86.6 187.50L88.6 189.10L86.6 189.90Z" fill="#9dd2fa"/>
<rect x="83.6" y="198.10" width="9.7" height="9.4" rx="1.4" fill="#b5b5b5" stroke="#6e6e6e" stroke-width="0.9"/>
<rect x="85.2" y="199.60" width="6.5" height="6.4" fill="#fff"/>
<path d="M85.4 199.80L91.5 205.80M91.5 199.80L85.4 205.80" stroke="#3f97e8" stroke-width="1.5"/>
<rect x="87" y="201.40" width="2.9" height="2.8" fill="#3f97e8"/>
<path d="M83.6 221.10V211.90Q92.6 212.30 93.4 221.10" fill="#f1f1f1" stroke="#888" stroke-width="0.8"/>
<path d="M84 221.10V217.90L87 221.10Z" fill="#d0d0d0"/>
<path d="M87.4 213.70L91 216.70L88 219.50L84.6 216.30Z" fill="#2f8fe6"/>
<path d="M87.6 215.30L89.2 216.70L87.9 217.90L86.4 216.50Z" fill="#fff"/>
<path d="M83.40 227.40L85.00 226.20L93.20 226.20L91.60 227.40Z" fill="#f5f5f5" stroke="#555" stroke-width="0.8" stroke-linejoin="round"/>
<path d="M91.60 227.40L93.20 226.20L93.20 234.40L91.60 235.60Z" fill="#bdbdbd" stroke="#555" stroke-width="0.8" stroke-linejoin="round"/>
<path d="M83.40 227.40L91.60 227.40L91.60 235.60L83.40 235.60Z" fill="#e4e4e4" stroke="#555" stroke-width="0.8" stroke-linejoin="round"/>
<circle cx="87.5" cy="231.50" r="3" fill="#fff" stroke="#555" stroke-width="0.8"/>
<path d="M85.2 230.00Q88.4 230.60 89.4 233.60A3 3 0 0 1 85.2 230.00Z" fill="#3f97e8"/>
<path d="M85 240.70Q88.6 239.30 92.2 240.70V248.70Q88.6 250.10 85 248.70Z" fill="#fafafa" stroke="#777" stroke-width="0.7"/>
<path d="M84 243.90Q88 244.10 93.3 241.60" stroke="#6ab6f4" stroke-width="1.3" fill="none"/>
<path d="M84 245.90Q88 246.10 93.3 243.60" stroke="#6ab6f4" stroke-width="1.3" fill="none"/>
<path d="M84 247.90Q88 248.10 93.3 245.60" stroke="#6ab6f4" stroke-width="1.3" fill="none"/>
<path d="M83.50 256.40L85.90 254.20L93.60 254.20L91.20 256.40Z" fill="#86c7f7"/>
<path d="M91.20 256.40L93.60 254.20L93.60 261.80L91.20 264.00Z" fill="#3f8fd8"/>
<path d="M83.50 256.40L91.20 256.40L91.20 264.00L83.50 264.00Z" fill="#62aee9"/>
<path d="M83.5 269.00V276.00Q87.8 278.40 92 276.00V269.00Z" fill="#5aa9ea"/>
<ellipse cx="87.75" cy="269.00" rx="4.25" ry="1.5" fill="#86c7f7"/>
<circle cx="88.1" cy="287.00" r="4.9" fill="#5aa9ea"/><circle cx="87" cy="285.90" r="3" fill="#82c4f6"/>
<ellipse cx="88.4" cy="300.80" rx="5.2" ry="3.6" fill="#3f9ae8"/><ellipse cx="88.4" cy="300.40" rx="3.9" ry="2.3" fill="#6ab8f5"/><ellipse cx="88.4" cy="300.40" rx="1.8" ry="0.9" fill="#d8eefc"/>
<path d="M91.8 309.80L85.2 311.80L91.6 313.60L85 315.40L91.8 317.00L84.8 318.80" stroke="#2a90e4" stroke-width="1.5" fill="none" stroke-linejoin="round"/>
<path d="M85.9 329.40L91 327.60" stroke="#2f8fe6" stroke-width="3.6" stroke-linecap="round"/>
<path d="M86.2 329.00L90.8 327.40" stroke="#7cc2f8" stroke-width="1.3" stroke-linecap="round"/>
<path d="M83.7 360.30L86.8 352.70V360.30Z" fill="#f4f4f4" stroke="#777" stroke-width="0.7" stroke-linejoin="round"/>
<path d="M88 352.70L91.8 360.30H88Z" fill="#2f8fe6"/>
<path d="M83.4 371.30L87.6 376.00L92.7 371.30V369.30L87.6 373.90L83.4 369.50Z" fill="#2f8fe6"/>
<path d="M83.5 369.70L88.7 366.50L92.6 368.90L87.5 373.30Z" fill="#fdfdfd" stroke="#333" stroke-width="0.7" stroke-linejoin="round"/>
<circle cx="87.4" cy="385.80" r="3.7" fill="#fdf3ea" stroke="#e67e33" stroke-width="1.8"/>
<path d="M88.4 380.20H92.8V384.80H91.2V381.80H88.4Z" fill="#e67e33"/>
<path d="M87.4 385.80V382.80A3 3 0 0 1 90.2 386.60Z" fill="#2f8fe6"/>
<path d="M83.3 399.10L85.4 396.50H91.3V402.10L89.2 404.30H83.3Z" fill="#e8e8e8" stroke="#666" stroke-width="0.8" stroke-linejoin="round"/>
<path d="M83.3 399.10H89.2V404.30M89.2 399.10L91.3 396.50" fill="none" stroke="#888" stroke-width="0.5"/>
<path d="M90.90 394.40L91.47 395.51L92.67 395.13L92.29 396.33L93.40 396.90L92.29 397.47L92.67 398.67L91.47 398.29L90.90 399.40L90.33 398.29L89.13 398.67L89.51 397.47L88.40 396.90L89.51 396.33L89.13 395.13L90.33 395.51Z" fill="#f7a600"/>
<defs><filter id="tsh" x="-5%" y="-30%" width="110%" height="160%"><feDropShadow dx="0.35" dy="0.45" stdDeviation="0.35" flood-color="#1e1e1e" flood-opacity="0.9"/></filter></defs>
<rect x="179.10" y="255.20" width="208.60" height="199.10" fill="#505050" rx="4.6" />
<text x="185.85" y="277.00" font-size="7.8" fill="#fff" font-weight="bold" textLength="105.34" lengthAdjust="spacingAndGlyphs" stroke="#ffffff" stroke-width="0.3" filter="url(#tsh)">ソリッド直方体を作成します。</text>
<text x="186.04" y="292.00" font-size="7.8" fill="#fff" font-weight="bold" textLength="187.24" lengthAdjust="spacingAndGlyphs" stroke="#ffffff" stroke-width="0.3" filter="url(#tsh)">平面を選択し、長方形を描画して、直方体の高さを指定</text>
<text x="187.10" y="300.00" font-size="7.8" fill="#fff" font-weight="bold" textLength="23.20" lengthAdjust="spacingAndGlyphs" stroke="#ffffff" stroke-width="0.3" filter="url(#tsh)">します。</text>
<text x="186.75" y="452.00" font-size="7.8" fill="#fff" font-weight="bold" textLength="162.90" lengthAdjust="spacingAndGlyphs" stroke="#ffffff" stroke-width="0.3" filter="url(#tsh)">ヘルプを表示するには Ctrl+/ を押してください。</text>
<defs><linearGradient id="ct" x1="0" y1="0.5" x2="1" y2="0.5"><stop offset="0" stop-color="#827e6f"/><stop offset="0.55" stop-color="#7e7a6b"/><stop offset="1" stop-color="#736f62"/></linearGradient><linearGradient id="cl" x1="0" y1="0" x2="0.6" y2="1"><stop offset="0" stop-color="#7a776d"/><stop offset="1" stop-color="#67645a"/></linearGradient><linearGradient id="cr" x1="1" y1="0" x2="0.3" y2="1"><stop offset="0" stop-color="#625f55"/><stop offset="1" stop-color="#545148"/></linearGradient></defs>
<path d="M281.00 313.30L334.30 340.50L281.00 370.30L227.40 339.80Z" fill="url(#ct)"/>
<path d="M227.40 339.80L281.00 370.30L281.00 431.30L232.90 396.40Z" fill="url(#cl)"/>
<path d="M281.00 370.30L334.30 340.50L331.00 398.20L281.00 431.30Z" fill="url(#cr)"/>
<path d="M281.00 370.30L232.90 396.40L281.00 431.30Z" fill="#726e62" opacity="0.75"/>
<path d="M281.00 370.30L331.00 398.20L281.00 431.30Z" fill="#4b4840" opacity="0.6"/>
<path d="M281.00 313.30L334.30 340.50L331.00 398.20L281.00 431.30L232.90 396.40L227.40 339.80Z" fill="none" stroke="#3b3934" stroke-width="0.8" stroke-linejoin="round"/>
<path d="M227.4 339.8L281 370.3L334.3 340.5" stroke="#45423b" stroke-width="0.7" fill="none"/>
<path d="M281 370.3L281 431.3" stroke="#8a867a" stroke-width="0.6" fill="none"/>
<path d="M281 370.3L232.9 396.4" stroke="#8f8b7f" stroke-width="0.55" fill="none"/>
<path d="M281 370.3L331 398.2" stroke="#6c85c4" stroke-width="0.9" fill="none"/>
<path d="M281 369.6V340" stroke="#a5a195" stroke-width="1"/>
<g transform="translate(252.4,354.2) rotate(207)"><path d="M-2.8 0H1.6" stroke="#f4f4f4" stroke-width="1.1"/><path d="M0.4 -2.1L3 0L0.4 2.1" fill="none" stroke="#f4f4f4" stroke-width="1.1"/></g>
<g transform="translate(310.2,353.8) rotate(-27)"><path d="M-2.8 0H1.6" stroke="#f4f4f4" stroke-width="1.1"/><path d="M0.4 -2.1L3 0L0.4 2.1" fill="none" stroke="#f4f4f4" stroke-width="1.1"/></g>
<g transform="translate(249.8,387.9) rotate(152)"><path d="M-2.8 0H1.6" stroke="#f4f4f4" stroke-width="1.1"/><path d="M0.4 -2.1L3 0L0.4 2.1" fill="none" stroke="#f4f4f4" stroke-width="1.1"/></g>
<g transform="translate(312.6,387.8) rotate(28)"><path d="M-2.8 0H1.6" stroke="#f4f4f4" stroke-width="1.1"/><path d="M0.4 -2.1L3 0L0.4 2.1" fill="none" stroke="#f4f4f4" stroke-width="1.1"/></g>
<path d="M281 329.2L285.2 333.6Q284.8 334.6 283 334.6V337.4Q281 339 279 337.4V334.6Q277.2 334.6 276.8 333.6Z" fill="#f6f6f6"/>
<path d="M281 330.8L283.8 333.6H282.2V337Q281 337.8 279.8 337V333.6H278.2Z" fill="#1b7fdc"/>
<rect x="280.4" y="339.4" width="1.2" height="1.8" fill="#d8d8d8"/>
<rect x="280.5" y="396.4" width="1" height="1.6" fill="#cfcfcf"/>
<text x="274.40" y="368.00" font-size="4.2" fill="#e2e2e2" font-weight="500" textLength="13.50" lengthAdjust="spacingAndGlyphs" >150.00</text>
<rect x="79.65" y="251.45" width="95.50" height="16.80" fill="none" rx="1.3" stroke="#fe0000" stroke-width="2.9" />
<rect x="1135.25" y="84.15" width="60.00" height="51.80" fill="none" rx="1.5" stroke="#fe0000" stroke-width="2.7" />
<rect x="0.00" y="613.50" width="1200.00" height="29.50" fill="#f2f2f2" />
<line x1="0.00" y1="613.50" x2="1200.00" y2="613.50" stroke="#d0d0d0" stroke-width="1" />
<path d="M5.2 625.7v8M13 625.7v8l-6.4 -4z" fill="#444" stroke="#444" stroke-width="1.4" stroke-linejoin="round"/>
<path d="M26.6 626.3000000000001v6.8l-6 -3.4z" fill="#444"/><path d="M28.3 627.3000000000001v4.8" stroke="#444" stroke-width="1.2"/>
<path d="M36.8 625.1v9.2l7.6 -4.6z" fill="#444"/>
<path d="M53.8 626.3000000000001v6.8l6 -3.4z" fill="#444"/><path d="M52 627.3000000000001v4.8" stroke="#444" stroke-width="1.2"/>
<path d="M75.8 625.7v8M68 625.7v8l6.4 -4z" fill="#444" stroke="#444" stroke-width="1.4" stroke-linejoin="round"/>
<path d="M83.9 620.2H91.3V621.6L88.2 625V640H87V625L83.9 621.6Z" fill="#4a4a4a"/>
<path d="M1198.02 628.45L1198.02 630.35L1196.14 630.81L1196.07 630.97L1197.07 632.63L1195.73 633.97L1194.07 632.97L1193.91 633.04L1193.45 634.92L1191.55 634.92L1191.09 633.04L1190.93 632.97L1189.27 633.97L1187.93 632.63L1188.93 630.97L1188.86 630.81L1186.98 630.35L1186.98 628.45L1188.86 627.99L1188.93 627.83L1187.93 626.17L1189.27 624.83L1190.93 625.83L1191.09 625.76L1191.55 623.88L1193.45 623.88L1193.91 625.76L1194.07 625.83L1195.73 624.83L1197.07 626.17L1196.07 627.83L1196.14 627.99Z" fill="#555"/><circle cx="1192.5" cy="629.4" r="1.9" fill="#f2f2f2"/>
</svg>
</body></html>
